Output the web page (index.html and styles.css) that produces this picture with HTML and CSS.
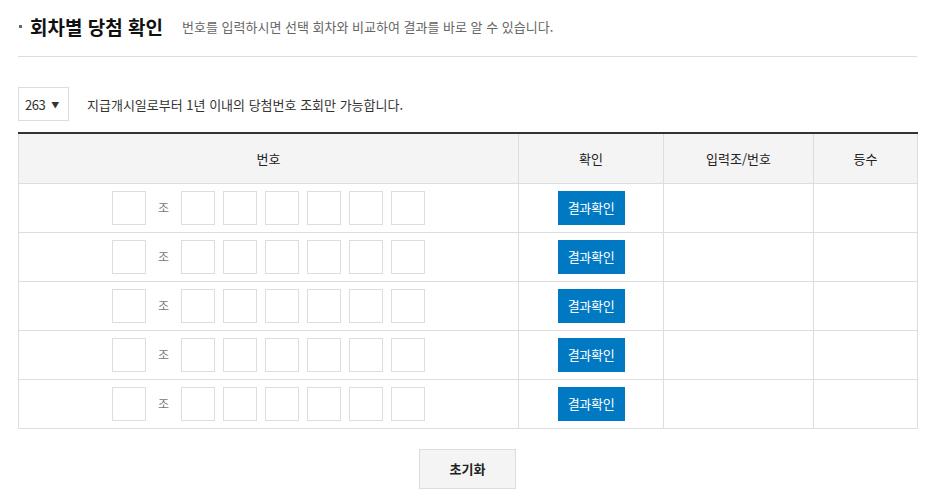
FILE: index.html
```html
<!DOCTYPE html>
<html lang="ko">
<head>
<meta charset="utf-8">
<link rel="stylesheet" href="styles.css">
</head>
<body>
<div class="wrap">
  <div class="head">
    <span class="bullet"></span>
    <h2 class="title">회차별 당첨 확인</h2>
    <p class="desc">번호를 입력하시면 선택 회차와 비교하여 결과를 바로 알 수 있습니다.</p>
  </div>
  <div class="filter">
    <div class="select"><span>263</span><span class="caret">▼</span></div>
    <p class="note">지급개시일로부터 1년 이내의 당첨번호 조회만 가능합니다.</p>
  </div>
  <table class="tbl">
    <colgroup>
      <col class="c-num"><col class="c-chk"><col class="c-in"><col class="c-rank">
    </colgroup>
    <thead>
      <tr><th>번호</th><th>확인</th><th>입력조/번호</th><th>등수</th></tr>
    </thead>
    <tbody>
      <tr>
        <td><div class="nums"><span class="box"></span><span class="jo">조</span><span class="box"></span><span class="box"></span><span class="box"></span><span class="box"></span><span class="box"></span><span class="box"></span></div></td>
        <td><button class="btn">결과확인</button></td><td></td><td></td>
      </tr>
      <tr>
        <td><div class="nums"><span class="box"></span><span class="jo">조</span><span class="box"></span><span class="box"></span><span class="box"></span><span class="box"></span><span class="box"></span><span class="box"></span></div></td>
        <td><button class="btn">결과확인</button></td><td></td><td></td>
      </tr>
      <tr>
        <td><div class="nums"><span class="box"></span><span class="jo">조</span><span class="box"></span><span class="box"></span><span class="box"></span><span class="box"></span><span class="box"></span><span class="box"></span></div></td>
        <td><button class="btn">결과확인</button></td><td></td><td></td>
      </tr>
      <tr>
        <td><div class="nums"><span class="box"></span><span class="jo">조</span><span class="box"></span><span class="box"></span><span class="box"></span><span class="box"></span><span class="box"></span><span class="box"></span></div></td>
        <td><button class="btn">결과확인</button></td><td></td><td></td>
      </tr>
      <tr>
        <td><div class="nums"><span class="box"></span><span class="jo">조</span><span class="box"></span><span class="box"></span><span class="box"></span><span class="box"></span><span class="box"></span><span class="box"></span></div></td>
        <td><button class="btn">결과확인</button></td><td></td><td></td>
      </tr>
    </tbody>
  </table>
  <div class="actions"><button class="reset">초기화</button></div>
</div>
</body>
</html>
```

FILE: styles.css
```css
* { box-sizing: border-box; }
body {
  margin: 0;
  background: #fff;
  font-family: "Noto Sans CJK KR", "Noto Sans", sans-serif;
  color: #333;
}
.wrap {
  width: 899px;
  margin-left: 18px;
}
.head {
  display: flex;
  align-items: center;
  height: 57px;
  border-bottom: 1px solid #ddd;
  padding-bottom: 3px;
}
.bullet {
  width: 3px;
  height: 3px;
  background: #666;
  margin-left: 1px;
  margin-right: 8px;
}
.title {
  margin: 0;
  font-size: 19px;
  font-weight: 700;
  color: #111;
}
.desc {
  margin: 0 0 0 19px;
  font-size: 13px;
  color: #666;
}
.filter {
  display: flex;
  align-items: center;
  margin-top: 30px;
}
.select {
  width: 51px;
  height: 34px;
  border: 1px solid #ddd;
  display: flex;
  align-items: center;
  padding-left: 6px;
  font-size: 13px;
  color: #333;
  letter-spacing: -0.5px;
}
.caret {
  font-size: 8px;
  margin-left: 6px;
}
.note {
  margin: 0 0 0 18px;
  font-size: 13px;
  color: #333;
}
.tbl {
  width: 899px;
  margin-top: 11px;
  border-collapse: collapse;
  table-layout: fixed;
  border-top: 2px solid #333;
}
.c-num { width: 500px; }
.c-chk { width: 145px; }
.c-in { width: 150px; }
.c-rank { width: 104px; }
.tbl th {
  height: 50px;
  background: #f4f4f4;
  font-size: 13px;
  font-weight: 400;
  color: #222;
  border: 1px solid #ddd;
  border-top: none;
  padding: 0;
}
.tbl td {
  height: 49px;
  border: 1px solid #ddd;
  padding: 0;
  text-align: center;
}
.nums {
  display: flex;
  justify-content: center;
  align-items: center;
  gap: 8px;
}
.box {
  width: 34px;
  height: 34px;
  border: 1px solid #ddd;
  background: #fff;
}
.jo {
  font-size: 12px;
  color: #777;
  width: 19px;
  text-align: center;
}
.btn {
  width: 67px;
  height: 34px;
  border: none;
  background: #0079c3;
  color: #fff;
  font-family: inherit;
  font-size: 13px;
  letter-spacing: -0.3px;
  padding: 0;
  cursor: pointer;
}
.actions {
  display: flex;
  justify-content: center;
  margin-top: 20px;
}
.reset {
  width: 97px;
  height: 40px;
  background: #f4f4f4;
  border: 1px solid #ddd;
  font-family: inherit;
  font-size: 13px;
  font-weight: 700;
  color: #222;
  cursor: pointer;
}
```
